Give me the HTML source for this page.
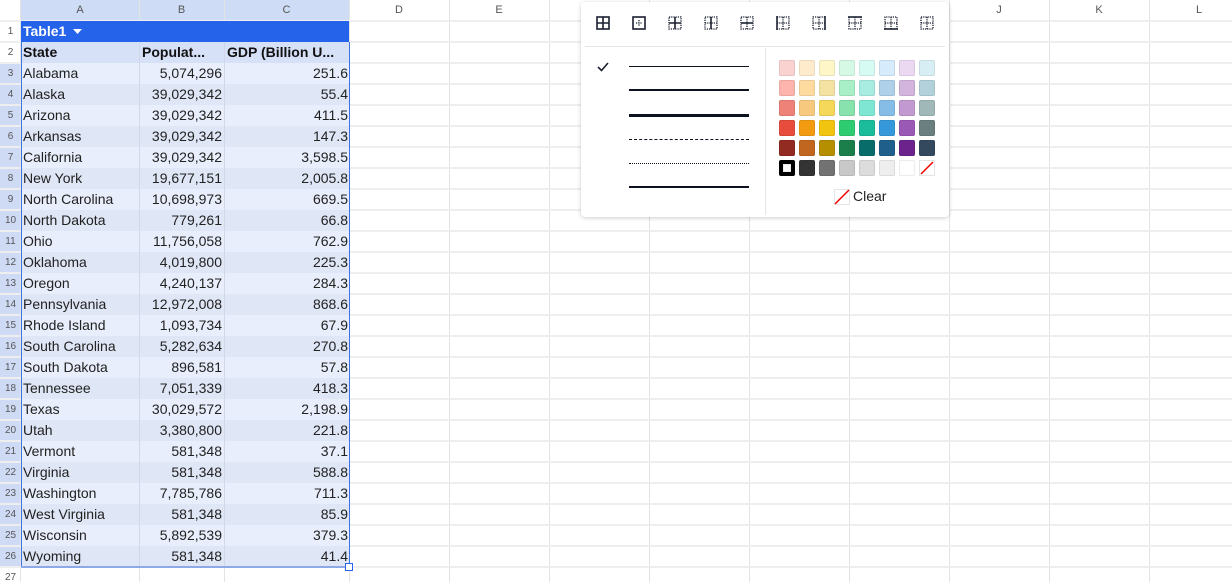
<!DOCTYPE html>
<html><head><meta charset="utf-8"><style>
*{box-sizing:border-box;margin:0;padding:0}
body{width:1232px;height:582px;overflow:hidden;background:#fff;font-family:"Liberation Sans",Arial,sans-serif;position:relative}
.vl{position:absolute;top:0;width:1px;height:582px;background:#e3e3e3}
.hl{position:absolute;left:0;width:1232px;height:2px;background:#eeeeee}
.ch{position:absolute;top:0;height:21px;font-size:11px;color:#555;text-align:center;line-height:21px}
.rh{position:absolute;left:0;width:21px;height:21px;font-size:10px;color:#555;text-align:center;line-height:21px}
.row{position:absolute;left:21px;width:328px;height:21px;font-size:14px;color:#222;line-height:21px}
.row span{position:absolute;top:0;height:21px;white-space:nowrap;overflow:hidden}
.a{left:2px;width:116px}
.b{left:118px;width:85px;text-align:right;padding-right:2px;border-left:1px solid #d0d8ea}
.c{left:203px;width:125px;text-align:right;padding-right:1px;border-left:1px solid #d0d8ea}
.o{background:#e8eefc}.e{background:#dfe6f6}
.pop{position:absolute;left:581px;top:2px;width:368px;height:215px;background:#fff;border-radius:4px;box-shadow:0 1px 4px rgba(0,0,0,.2)}
.ic{position:absolute;top:14px;width:14px;height:14px}
.ln{position:absolute;left:48px;width:120px}
.sw{position:absolute;width:16px;height:16px;border-radius:2px;box-shadow:inset 0 0 0 1px rgba(0,0,0,.08)}
.d{stroke-dasharray:1.2 1;stroke-width:1.3}
</style></head><body>
<div style="position:absolute;left:21px;top:0;width:328px;height:21px;background:#cfdcf6"></div>
<div class="ch" style="left:21px;width:118px">A</div>
<div class="ch" style="left:139px;width:85px">B</div>
<div class="ch" style="left:224px;width:125px">C</div>
<div class="ch" style="left:349px;width:100px">D</div>
<div class="ch" style="left:449px;width:100px">E</div>
<div class="ch" style="left:949px;width:100px">J</div>
<div class="ch" style="left:1049px;width:100px">K</div>
<div class="ch" style="left:1149px;width:100px">L</div>
<div style="position:absolute;left:0;top:63px;width:21px;height:504px;background:#cfdbf5"></div>
<div class="vl" style="left:20px"></div><div class="vl" style="left:139px"></div><div class="vl" style="left:224px"></div><div class="vl" style="left:349px"></div><div class="vl" style="left:449px"></div><div class="vl" style="left:549px"></div><div class="vl" style="left:649px"></div><div class="vl" style="left:749px"></div><div class="vl" style="left:849px"></div><div class="vl" style="left:949px"></div><div class="vl" style="left:1049px"></div><div class="vl" style="left:1149px"></div>
<div class="hl" style="top:20px"></div><div class="hl" style="top:41px"></div><div class="hl" style="top:62px"></div><div class="hl" style="top:83px"></div><div class="hl" style="top:104px"></div><div class="hl" style="top:125px"></div><div class="hl" style="top:146px"></div><div class="hl" style="top:167px"></div><div class="hl" style="top:188px"></div><div class="hl" style="top:209px"></div><div class="hl" style="top:230px"></div><div class="hl" style="top:251px"></div><div class="hl" style="top:272px"></div><div class="hl" style="top:293px"></div><div class="hl" style="top:314px"></div><div class="hl" style="top:335px"></div><div class="hl" style="top:356px"></div><div class="hl" style="top:377px"></div><div class="hl" style="top:398px"></div><div class="hl" style="top:419px"></div><div class="hl" style="top:440px"></div><div class="hl" style="top:461px"></div><div class="hl" style="top:482px"></div><div class="hl" style="top:503px"></div><div class="hl" style="top:524px"></div><div class="hl" style="top:545px"></div><div class="hl" style="top:566px"></div>
<div class="rh" style="top:21px">1</div><div class="rh" style="top:42px">2</div><div class="rh" style="top:63px">3</div><div class="rh" style="top:84px">4</div><div class="rh" style="top:105px">5</div><div class="rh" style="top:126px">6</div><div class="rh" style="top:147px">7</div><div class="rh" style="top:168px">8</div><div class="rh" style="top:189px">9</div><div class="rh" style="top:210px">10</div><div class="rh" style="top:231px">11</div><div class="rh" style="top:252px">12</div><div class="rh" style="top:273px">13</div><div class="rh" style="top:294px">14</div><div class="rh" style="top:315px">15</div><div class="rh" style="top:336px">16</div><div class="rh" style="top:357px">17</div><div class="rh" style="top:378px">18</div><div class="rh" style="top:399px">19</div><div class="rh" style="top:420px">20</div><div class="rh" style="top:441px">21</div><div class="rh" style="top:462px">22</div><div class="rh" style="top:483px">23</div><div class="rh" style="top:504px">24</div><div class="rh" style="top:525px">25</div><div class="rh" style="top:546px">26</div><div class="rh" style="top:567px">27</div>
<div class="row" style="top:21px;background:#2563eb;color:#fff;font-weight:bold"><span class="a">Table1 <svg width="9" height="6" style="margin-left:3px;vertical-align:middle"><path d="M0 0H9L4.5 5Z" fill="#fff"/></svg></span></div>
<div class="row" style="top:42px;background:#d6e1f8;font-weight:bold;color:#111"><span class="a">State</span><span class="b" style="text-align:left;padding-left:2px">Populat...</span><span class="c" style="text-align:left;padding-left:2px">GDP (Billion U...</span></div>
<div class="row o" style="top:63px"><span class="a">Alabama</span><span class="b">5,074,296</span><span class="c">251.6</span></div>
<div class="row e" style="top:84px"><span class="a">Alaska</span><span class="b">39,029,342</span><span class="c">55.4</span></div>
<div class="row o" style="top:105px"><span class="a">Arizona</span><span class="b">39,029,342</span><span class="c">411.5</span></div>
<div class="row e" style="top:126px"><span class="a">Arkansas</span><span class="b">39,029,342</span><span class="c">147.3</span></div>
<div class="row o" style="top:147px"><span class="a">California</span><span class="b">39,029,342</span><span class="c">3,598.5</span></div>
<div class="row e" style="top:168px"><span class="a">New York</span><span class="b">19,677,151</span><span class="c">2,005.8</span></div>
<div class="row o" style="top:189px"><span class="a">North Carolina</span><span class="b">10,698,973</span><span class="c">669.5</span></div>
<div class="row e" style="top:210px"><span class="a">North Dakota</span><span class="b">779,261</span><span class="c">66.8</span></div>
<div class="row o" style="top:231px"><span class="a">Ohio</span><span class="b">11,756,058</span><span class="c">762.9</span></div>
<div class="row e" style="top:252px"><span class="a">Oklahoma</span><span class="b">4,019,800</span><span class="c">225.3</span></div>
<div class="row o" style="top:273px"><span class="a">Oregon</span><span class="b">4,240,137</span><span class="c">284.3</span></div>
<div class="row e" style="top:294px"><span class="a">Pennsylvania</span><span class="b">12,972,008</span><span class="c">868.6</span></div>
<div class="row o" style="top:315px"><span class="a">Rhode Island</span><span class="b">1,093,734</span><span class="c">67.9</span></div>
<div class="row e" style="top:336px"><span class="a">South Carolina</span><span class="b">5,282,634</span><span class="c">270.8</span></div>
<div class="row o" style="top:357px"><span class="a">South Dakota</span><span class="b">896,581</span><span class="c">57.8</span></div>
<div class="row e" style="top:378px"><span class="a">Tennessee</span><span class="b">7,051,339</span><span class="c">418.3</span></div>
<div class="row o" style="top:399px"><span class="a">Texas</span><span class="b">30,029,572</span><span class="c">2,198.9</span></div>
<div class="row e" style="top:420px"><span class="a">Utah</span><span class="b">3,380,800</span><span class="c">221.8</span></div>
<div class="row o" style="top:441px"><span class="a">Vermont</span><span class="b">581,348</span><span class="c">37.1</span></div>
<div class="row e" style="top:462px"><span class="a">Virginia</span><span class="b">581,348</span><span class="c">588.8</span></div>
<div class="row o" style="top:483px"><span class="a">Washington</span><span class="b">7,785,786</span><span class="c">711.3</span></div>
<div class="row e" style="top:504px"><span class="a">West Virginia</span><span class="b">581,348</span><span class="c">85.9</span></div>
<div class="row o" style="top:525px"><span class="a">Wisconsin</span><span class="b">5,892,539</span><span class="c">379.3</span></div>
<div class="row e" style="top:546px"><span class="a">Wyoming</span><span class="b">581,348</span><span class="c">41.4</span></div>
<div style="position:absolute;left:21px;top:42px;width:329px;height:526px;border:1px solid #3b73e0;border-top:none"></div>
<div style="position:absolute;left:21px;top:566px;width:329px;height:2px;background:#8eaae6"></div>
<div style="position:absolute;left:345px;top:563px;width:8px;height:8px;border:1px solid #2563eb;background:#fff"></div>
<div class="pop">
<svg class="ic" style="left:15px" viewBox="0 0 14 14" fill="none" stroke="#1a2030" stroke-width="1.6"><rect x="1" y="1" width="12" height="12"/><path d="M7 1V13M1 7H13"/></svg>
<svg class="ic" style="left:51px" viewBox="0 0 14 14" fill="none" stroke="#1a2030"><rect x="1" y="1" width="12" height="12" stroke-width="1.6"/><path class="d" d="M7 4V10M4 7H10"/></svg>
<svg class="ic" style="left:87px" viewBox="0 0 14 14" fill="none" stroke="#1a2030"><rect class="d" x="1" y="1" width="12" height="12"/><path d="M7 1V13M1 7H13" stroke-width="1.6"/></svg>
<svg class="ic" style="left:123px" viewBox="0 0 14 14" fill="none" stroke="#1a2030"><rect class="d" x="1" y="1" width="12" height="12"/><path class="d" d="M1 7H13"/><path d="M7 1V13" stroke-width="1.6"/></svg>
<svg class="ic" style="left:159px" viewBox="0 0 14 14" fill="none" stroke="#1a2030"><rect class="d" x="1" y="1" width="12" height="12"/><path class="d" d="M7 1V13"/><path d="M1 7H13" stroke-width="1.6"/></svg>
<svg class="ic" style="left:195px" viewBox="0 0 14 14" fill="none" stroke="#1a2030"><path class="d" d="M1 1H13V13H1M7 1V13M1 7H13"/><path d="M1 0V14" stroke-width="1.6"/></svg>
<svg class="ic" style="left:231px" viewBox="0 0 14 14" fill="none" stroke="#1a2030"><path class="d" d="M13 1H1V13H13M7 1V13M1 7H13"/><path d="M13 0V14" stroke-width="1.6"/></svg>
<svg class="ic" style="left:267px" viewBox="0 0 14 14" fill="none" stroke="#1a2030"><path class="d" d="M1 1V13H13V1M7 1V13M1 7H13"/><path d="M0 1H14" stroke-width="1.6"/></svg>
<svg class="ic" style="left:303px" viewBox="0 0 14 14" fill="none" stroke="#1a2030"><path class="d" d="M1 13V1H13V13M7 1V13M1 7H13"/><path d="M0 13H14" stroke-width="1.6"/></svg>
<svg class="ic" style="left:339px" viewBox="0 0 14 14" fill="none" stroke="#1a2030"><rect class="d" x="1" y="1" width="12" height="12"/><path class="d" d="M7 1V13M1 7H13"/></svg>
<div style="position:absolute;left:4px;right:4px;top:44px;height:1px;background:#e2e5ea"></div>
<div style="position:absolute;left:184px;top:46px;bottom:2px;width:1px;background:#e2e5ea"></div>
<svg style="position:absolute;left:16px;top:60px" width="12" height="10" viewBox="0 0 12 10" fill="none" stroke="#1a2030" stroke-width="1.6"><path d="M1 5L4.5 8.5L11 1"/></svg>
<div class="ln" style="top:64px;border-top:1px solid #0d1220"></div>
<div class="ln" style="top:87px;border-top:2px solid #0d1220"></div>
<div class="ln" style="top:112px;border-top:3px solid #0d1220"></div>
<div class="ln" style="top:137px;border-top:1px dashed #0d1220"></div>
<div class="ln" style="top:161px;border-top:1px dotted #0d1220"></div>
<div class="ln" style="top:184px;border-top:2px solid #0d1220"></div>
<div class="sw" style="left:198px;top:58px;background:#fad2cf"></div><div class="sw" style="left:218px;top:58px;background:#fdebcc"></div><div class="sw" style="left:238px;top:58px;background:#fef6c6"></div><div class="sw" style="left:258px;top:58px;background:#d6f9e6"></div><div class="sw" style="left:278px;top:58px;background:#d5fbf2"></div><div class="sw" style="left:298px;top:58px;background:#d6ebfb"></div><div class="sw" style="left:318px;top:58px;background:#ebd8f1"></div><div class="sw" style="left:338px;top:58px;background:#d8eef5"></div>
<div class="sw" style="left:198px;top:78px;background:#fdb4ad"></div><div class="sw" style="left:218px;top:78px;background:#fddba0"></div><div class="sw" style="left:238px;top:78px;background:#f3e2a2"></div><div class="sw" style="left:258px;top:78px;background:#a8eec7"></div><div class="sw" style="left:278px;top:78px;background:#a8ebe1"></div><div class="sw" style="left:298px;top:78px;background:#aed0e9"></div><div class="sw" style="left:318px;top:78px;background:#d2b4dd"></div><div class="sw" style="left:338px;top:78px;background:#b2d1da"></div>
<div class="sw" style="left:198px;top:98px;background:#ef8278"></div><div class="sw" style="left:218px;top:98px;background:#f7c97f"></div><div class="sw" style="left:238px;top:98px;background:#f5d75a"></div><div class="sw" style="left:258px;top:98px;background:#87e2ae"></div><div class="sw" style="left:278px;top:98px;background:#7ee6d3"></div><div class="sw" style="left:298px;top:98px;background:#86bde6"></div><div class="sw" style="left:318px;top:98px;background:#c29ad1"></div><div class="sw" style="left:338px;top:98px;background:#a1b8b9"></div>
<div class="sw" style="left:198px;top:118px;background:#e74c3c"></div><div class="sw" style="left:218px;top:118px;background:#f39c12"></div><div class="sw" style="left:238px;top:118px;background:#f1c40f"></div><div class="sw" style="left:258px;top:118px;background:#2ecc71"></div><div class="sw" style="left:278px;top:118px;background:#1abc9c"></div><div class="sw" style="left:298px;top:118px;background:#3498db"></div><div class="sw" style="left:318px;top:118px;background:#9b59b6"></div><div class="sw" style="left:338px;top:118px;background:#6b7f80"></div>
<div class="sw" style="left:198px;top:138px;background:#922b21"></div><div class="sw" style="left:218px;top:138px;background:#c0661e"></div><div class="sw" style="left:238px;top:138px;background:#b68f00"></div><div class="sw" style="left:258px;top:138px;background:#1a7f4a"></div><div class="sw" style="left:278px;top:138px;background:#086d6a"></div><div class="sw" style="left:298px;top:138px;background:#1f5f8b"></div><div class="sw" style="left:318px;top:138px;background:#6c248c"></div><div class="sw" style="left:338px;top:138px;background:#34495e"></div>
<div class="sw" style="left:198px;top:158px;background:#fff;border:4px solid #000"></div><div class="sw" style="left:218px;top:158px;background:#333"></div><div class="sw" style="left:238px;top:158px;background:#727272"></div><div class="sw" style="left:258px;top:158px;background:#c8c8c8"></div><div class="sw" style="left:278px;top:158px;background:#dcdcdc"></div><div class="sw" style="left:298px;top:158px;background:#eeeeee"></div><div class="sw" style="left:318px;top:158px;background:#fff"></div>
<svg style="position:absolute;left:338px;top:158px" width="16" height="16"><rect x=".5" y=".5" width="15" height="15" fill="#fff" stroke="#e5e5e5"/><path d="M2 14L14 2" stroke="#e00" stroke-width="1.5"/></svg>
<svg style="position:absolute;left:253px;top:187px" width="16" height="16"><rect x=".5" y=".5" width="15" height="15" fill="#fff" stroke="#e5e5e5"/><path d="M1 15L15 1" stroke="#e00" stroke-width="1.5"/></svg>
<div style="position:absolute;left:272px;top:186px;font-size:14px;color:#222">Clear</div>
</div>
</body></html>
